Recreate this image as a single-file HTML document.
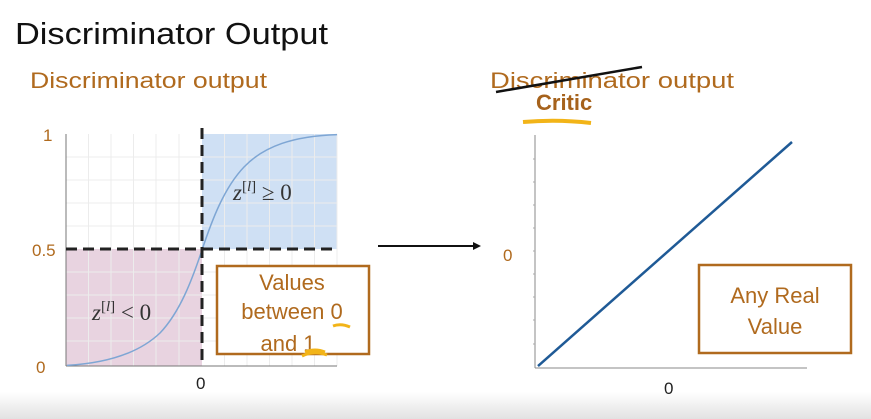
<!DOCTYPE html>
<html><head><meta charset="utf-8"><style>
html,body{margin:0;padding:0;background:#fff;}
body{width:871px;height:419px;overflow:hidden;position:relative;font-family:"Liberation Sans",sans-serif;}
</style></head><body>
<svg width="871" height="419" viewBox="0 0 871 419" xmlns="http://www.w3.org/2000/svg" style="position:absolute;left:0;top:0">
<defs>
<linearGradient id="bot" x1="0" y1="0" x2="0" y2="1"><stop offset="0" stop-color="#fff"/><stop offset="1" stop-color="#e2e2e2"/></linearGradient>
</defs>
<rect x="0" y="392" width="871" height="27" fill="url(#bot)"/>
<text x="15" y="44" font-size="31" fill="#111" textLength="313" lengthAdjust="spacingAndGlyphs">Discriminator Output</text>
<text x="30" y="88" font-size="22" fill="#b06a1e" textLength="237" lengthAdjust="spacingAndGlyphs">Discriminator output</text>

<rect x="202" y="134" width="135" height="115" fill="#cfe0f4"/>
<rect x="66" y="249" width="136" height="117" fill="#e8d3e0"/>
<g stroke="#ececec" stroke-width="1">
<line x1="88.5" y1="134" x2="88.5" y2="366"/><line x1="111" y1="134" x2="111" y2="366"/><line x1="133.5" y1="134" x2="133.5" y2="366"/><line x1="156" y1="134" x2="156" y2="366"/><line x1="179" y1="134" x2="179" y2="366"/><line x1="224.5" y1="134" x2="224.5" y2="366"/><line x1="247" y1="134" x2="247" y2="366"/><line x1="269.5" y1="134" x2="269.5" y2="366"/><line x1="292" y1="134" x2="292" y2="366"/><line x1="314.5" y1="134" x2="314.5" y2="366"/><line x1="337" y1="134" x2="337" y2="366"/>
<line x1="66" y1="157" x2="337" y2="157"/><line x1="66" y1="180" x2="337" y2="180"/><line x1="66" y1="203" x2="337" y2="203"/><line x1="66" y1="226" x2="337" y2="226"/><line x1="66" y1="272" x2="337" y2="272"/><line x1="66" y1="295" x2="337" y2="295"/><line x1="66" y1="318" x2="337" y2="318"/><line x1="66" y1="341" x2="337" y2="341"/>
</g>
<line x1="66" y1="134" x2="66" y2="366" stroke="#777" stroke-width="1"/>
<line x1="66" y1="366" x2="337" y2="366" stroke="#777" stroke-width="1"/>
<path fill="none" stroke="#7ea6d4" stroke-width="1.5" d="M67,365.4 C110,363 140,352 160,333 C180,312 192,280 202,250 C212,220 224,188 244,167 C264,146 294,136 337,134.6"/>
<line x1="202" y1="128" x2="202" y2="366" stroke="#222" stroke-width="3" stroke-dasharray="11,6"/>
<line x1="66" y1="249" x2="337" y2="249" stroke="#222" stroke-width="3" stroke-dasharray="11,6"/>
<text x="43" y="141" font-size="17" fill="#b06a1e">1</text>
<text x="32" y="256" font-size="17" fill="#b06a1e">0.5</text>
<text x="36" y="373" font-size="17" fill="#b06a1e">0</text>
<text x="196" y="389" font-size="17" fill="#222">0</text>
<text x="233" y="200" font-size="23" fill="#333" font-family="Liberation Serif,serif"><tspan font-style="italic">z</tspan><tspan dy="-9" font-size="15">[<tspan font-style="italic">l</tspan>]</tspan><tspan dy="9"> ≥ 0</tspan></text>
<text x="92" y="320" font-size="23" fill="#333" font-family="Liberation Serif,serif"><tspan font-style="italic">z</tspan><tspan dy="-9" font-size="15">[<tspan font-style="italic">l</tspan>]</tspan><tspan dy="9"> &lt; 0</tspan></text>
<rect x="217" y="266" width="152" height="88" fill="#fff" stroke="#b06a1e" stroke-width="2.5"/>
<g font-size="22" fill="#b06a1e" text-anchor="middle">
<text x="292" y="290">Values</text>
<text x="292" y="319">between 0</text>
<text x="288" y="351">and 1</text>
</g>
<path d="M333,326 q8,-3 17,1" stroke="#f2b418" stroke-width="3" fill="none"/>
<path d="M302,356 q12,-6 25,-1 M305,352 q10,-4 20,0" stroke="#f2b418" stroke-width="3" fill="none"/>

<line x1="378" y1="246" x2="475" y2="246" stroke="#111" stroke-width="2"/>
<path d="M473,242 L481,246 L473,250 Z" fill="#111"/>

<text x="490" y="88" font-size="22" fill="#b06a1e" textLength="244" lengthAdjust="spacingAndGlyphs">Discriminator  output</text>
<line x1="496" y1="92" x2="642" y2="67" stroke="#111" stroke-width="2.5"/>
<text x="536" y="110" font-size="22" font-weight="bold" fill="#a6621c">Critic</text>
<path d="M523,122 q35,-3 68,1" stroke="#f2b418" stroke-width="4" fill="none"/>
<line x1="535" y1="135" x2="535" y2="368" stroke="#888" stroke-width="1"/>
<line x1="535" y1="368" x2="807" y2="368" stroke="#888" stroke-width="1"/>
<g stroke="#aaa" stroke-width="1">
<line x1="533" y1="159" x2="535" y2="159"/><line x1="533" y1="182" x2="535" y2="182"/><line x1="533" y1="205" x2="535" y2="205"/><line x1="533" y1="228" x2="535" y2="228"/><line x1="533" y1="251" x2="535" y2="251"/><line x1="533" y1="274" x2="535" y2="274"/><line x1="533" y1="297" x2="535" y2="297"/><line x1="533" y1="320" x2="535" y2="320"/><line x1="533" y1="344" x2="535" y2="344"/>
</g>
<line x1="538" y1="366" x2="792" y2="142" stroke="#1f5a96" stroke-width="2.5"/>
<text x="503" y="261" font-size="17" fill="#b06a1e">0</text>
<text x="664" y="394" font-size="17" fill="#222">0</text>
<rect x="699" y="265" width="152" height="88" fill="#fff" stroke="#b06a1e" stroke-width="2.5"/>
<g font-size="22" fill="#b06a1e" text-anchor="middle">
<text x="775" y="303">Any Real</text>
<text x="775" y="334">Value</text>
</g>
</svg>
</body></html>
